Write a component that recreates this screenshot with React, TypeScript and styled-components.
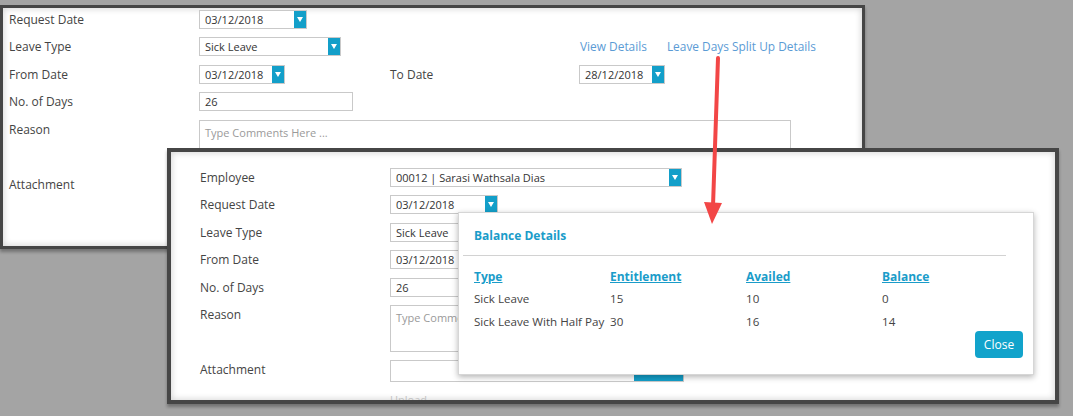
import React from "react";
import styled, { createGlobalStyle } from "styled-components";

const Global = createGlobalStyle`
  html, body { margin: 0; padding: 0; background: #a4a4a4; }
  body { font-family: "Open Sans", "Noto Sans", sans-serif; }
`;

const Desktop = styled.div`
  position: relative;
  width: 1073px;
  height: 416px;
  background: #a4a4a4;
  overflow: hidden;
`;

const Win = styled.div<{ $x: number; $y: number; $w: number; $h: number; $pl: number; $pt: number; $b: number }>`
  position: absolute;
  left: ${(p) => p.$x}px;
  top: ${(p) => p.$y}px;
  width: ${(p) => p.$w}px;
  height: ${(p) => p.$h}px;
  box-sizing: border-box;
  border: ${(p) => p.$b}px solid #464646;
  background: #fff;
  box-shadow: inset 0 0 6px 1px rgba(0, 0, 0, 0.16), 0 3px 3px rgba(0, 0, 0, 0.3);
  padding: ${(p) => p.$pt}px 0 0 ${(p) => p.$pl}px;
  overflow: hidden;
`;

const Form = styled.div`
  display: grid;
  grid-template-columns: 190px 191px 189px 1fr;
  grid-auto-rows: auto;
  row-gap: 8.4px;
  align-items: start;
`;

const Label = styled.div<{ $col?: number }>`
  grid-column: ${(p) => p.$col ?? 1};
  font-size: 12px;
  line-height: 19px;
  color: #444;
  white-space: nowrap;
`;

const Cell = styled.div<{ $col: number; $span?: number }>`
  grid-column: ${(p) => p.$col} / span ${(p) => p.$span ?? 1};
  display: flex;
  align-items: center;
`;

const Box = styled.div<{ $w: number; $h?: number }>`
  width: ${(p) => p.$w}px;
  height: ${(p) => p.$h ?? 19}px;
  box-sizing: border-box;
  border: 1px solid #c9c9c9;
  background: #fff;
  display: flex;
  align-items: stretch;
  font-size: 11px;
  color: #333;
`;

const BoxText = styled.span`
  flex: 1;
  padding-left: 5px;
  line-height: 17px;
  white-space: nowrap;
  overflow: hidden;
`;

const Drop = styled.span`
  width: 12px;
  background: #139fc9;
  display: flex;
  align-items: center;
  justify-content: center;
  &::after {
    content: "";
    border-left: 3.5px solid transparent;
    border-right: 3.5px solid transparent;
    border-top: 5px solid #fff;
  }
`;

const TextArea = styled.div<{ $w: number }>`
  width: ${(p) => p.$w}px;
  height: 47px;
  box-sizing: border-box;
  border: 1px solid #c9c9c9;
  padding: 4px 0 0 5px;
  font-size: 11px;
  color: #9a9a9a;
  white-space: nowrap;
  overflow: hidden;
`;

const Links = styled.div`
  display: flex;
  gap: 20px;
  padding-left: 1px;
`;

const Link = styled.span`
  font-size: 11.9px;
  line-height: 19px;
  color: #5b9bd5;
  white-space: nowrap;
`;

const BrowseBtn = styled.span`
  width: 49px;
  background: #139fc9;
  color: #fff;
  font-size: 11px;
  line-height: 13px;
  display: flex;
  align-items: flex-start;
  justify-content: center;
`;

const Upload = styled.div`
  grid-column: 2;
  font-size: 11px;
  color: #c2c2c2;
  line-height: 15px;
  margin-top: 1px;
`;

const Popup = styled.div`
  position: absolute;
  left: 458px;
  top: 212px;
  width: 576px;
  height: 163px;
  box-sizing: border-box;
  background: #fff;
  border: 1px solid #d6d6d6;
  box-shadow: 0 2px 6px rgba(0, 0, 0, 0.3);
  display: flex;
  flex-direction: column;
  font-size: 12px;
  color: #444;
`;

const PopTitle = styled.div`
  margin: 14px 0 0 15px;
  height: 17px;
  line-height: 17px;
  font-weight: 700;
  color: #1a9cc9;
`;

const Rule = styled.div`
  margin: 11px 27px 0 4px;
  height: 1px;
  background: #d2d2d2;
`;

const Table = styled.div`
  margin: 9px 0 0 15px;
  display: grid;
  grid-template-columns: repeat(4, 136px);
  grid-auto-rows: 22.5px;
  align-items: center;
`;

const Th = styled.div`
  font-weight: 700;
  color: #1a9cc9;
  text-decoration: underline;
  white-space: nowrap;
`;

const Td = styled.div`
  font-size: 11.6px;
  white-space: nowrap;
`;

const CloseBtn = styled.button`
  align-self: flex-end;
  margin: -2px 10px 0 0;
  width: 48px;
  height: 27px;
  border: none;
  border-radius: 4px;
  background: #12a3cb;
  color: #fff;
  font-family: inherit;
  font-size: 12px;
  padding: 0;
`;

const Arrow = styled.svg`
  position: absolute;
  left: 0;
  top: 0;
  pointer-events: none;
`;

const DateBox = ({ v }: { v: string }) => (
  <Box $w={108}>
    <BoxText>{v}</BoxText>
    <Drop />
  </Box>
);

export default function App() {
  return (
    <>
      <Global />
      <Desktop>
        <Win $x={0} $y={5} $w={865} $h={244} $b={3} $pl={6} $pt={2}>
          <Form>
            <Label>Request Date</Label>
            <Cell $col={2}>
              <DateBox v="03/12/2018" />
            </Cell>

            <Label>Leave Type</Label>
            <Cell $col={2}>
              <Box $w={142}>
                <BoxText>Sick Leave</BoxText>
                <Drop />
              </Box>
            </Cell>
            <Cell $col={4}>
              <Links>
                <Link>View Details</Link>
                <Link>Leave Days Split Up Details</Link>
              </Links>
            </Cell>

            <Label>From Date</Label>
            <Cell $col={2}>
              <Box $w={86}>
                <BoxText>03/12/2018</BoxText>
                <Drop />
              </Box>
            </Cell>
            <Label $col={3}>To Date</Label>
            <Cell $col={4}>
              <Box $w={86}>
                <BoxText>28/12/2018</BoxText>
                <Drop />
              </Box>
            </Cell>

            <Label>No. of Days</Label>
            <Cell $col={2}>
              <Box $w={154}>
                <BoxText>26</BoxText>
              </Box>
            </Cell>

            <Label>Reason</Label>
            <Cell $col={2} $span={3}>
              <TextArea $w={592}>Type Comments Here ...</TextArea>
            </Cell>

            <Label>Attachment</Label>
          </Form>
        </Win>

        <Win $x={167} $y={148} $w={892} $h={256} $b={4} $pl={29} $pt={16}>
          <Form>
            <Label>Employee</Label>
            <Cell $col={2} $span={3}>
              <Box $w={292}>
                <BoxText>00012 | Sarasi Wathsala Dias</BoxText>
                <Drop />
              </Box>
            </Cell>

            <Label>Request Date</Label>
            <Cell $col={2}>
              <DateBox v="03/12/2018" />
            </Cell>

            <Label>Leave Type</Label>
            <Cell $col={2}>
              <Box $w={142}>
                <BoxText>Sick Leave</BoxText>
                <Drop />
              </Box>
            </Cell>

            <Label>From Date</Label>
            <Cell $col={2}>
              <Box $w={86}>
                <BoxText>03/12/2018</BoxText>
                <Drop />
              </Box>
            </Cell>

            <Label>No. of Days</Label>
            <Cell $col={2}>
              <Box $w={154}>
                <BoxText>26</BoxText>
              </Box>
            </Cell>

            <Label>Reason</Label>
            <Cell $col={2} $span={3}>
              <TextArea $w={592}>Type Comments Here ...</TextArea>
            </Cell>

            <Label>Attachment</Label>
            <Cell $col={2} $span={3}>
              <Box $w={294} $h={22}>
                <BoxText />
                <BrowseBtn>Browse</BrowseBtn>
              </Box>
            </Cell>
            <Upload>Upload</Upload>
          </Form>
        </Win>

        <Popup>
          <PopTitle>Balance Details</PopTitle>
          <Rule />
          <Table>
            <Th>Type</Th>
            <Th>Entitlement</Th>
            <Th>Availed</Th>
            <Th>Balance</Th>
            <Td>Sick Leave</Td>
            <Td>15</Td>
            <Td>10</Td>
            <Td>0</Td>
            <Td>Sick Leave With Half Pay</Td>
            <Td>30</Td>
            <Td>16</Td>
            <Td>14</Td>
          </Table>
          <CloseBtn>Close</CloseBtn>
        </Popup>

        <Arrow width={1073} height={416} viewBox="0 0 1073 416">
          <line x1={718} y1={58} x2={713} y2={206} stroke="#f24646" strokeWidth={4} strokeLinecap="round" />
          <polygon points="704,202 722,203 712,224" fill="#f24646" />
        </Arrow>
      </Desktop>
    </>
  );
}
